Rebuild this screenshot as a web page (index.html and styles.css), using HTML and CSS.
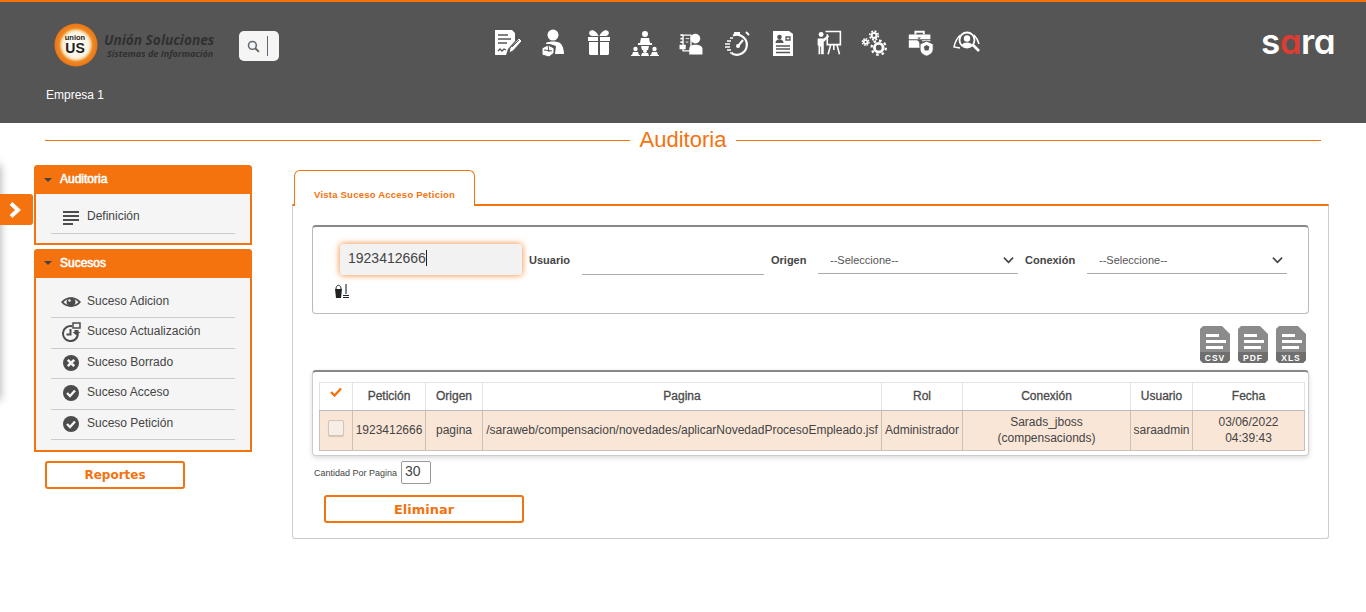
FILE: index.html
```html
<!DOCTYPE html>
<html lang="es">
<head>
<meta charset="utf-8">
<title>Auditoria</title>
<link rel="stylesheet" href="styles.css">
</head>
<body>
<header class="topbar">
  <div class="topbar-row">
    <div class="brand">
      <svg class="brand-mark" viewBox="0 0 44 44" width="44" height="44">
        <defs><radialGradient id="lg" cx="50%" cy="50%" r="50%"><stop offset="0" stop-color="#fff"/><stop offset=".6" stop-color="#fbf3df"/><stop offset=".7" stop-color="#f6c98a"/><stop offset=".78" stop-color="#ef8a25"/><stop offset="1" stop-color="#ea7414"/></radialGradient></defs>
        <circle cx="22" cy="22" r="21.500" fill="url(#lg)"/>
        <text x="21" y="17" class="mark-small" text-anchor="middle">union</text>
        <text x="21" y="30" class="mark-big" text-anchor="middle">US</text>
      </svg>
      <div class="brand-text">
        <div class="brand-name">Unión Soluciones</div>
        <div class="brand-sub">Sistemas de Información</div>
      </div>
    </div>
    <div class="search">
      <svg viewBox="0 0 12 12" width="13" height="13"><circle cx="5" cy="5" r="3.600" fill="none" stroke="#5d6a75" stroke-width="1.400"/><path d="M7.600 7.600 11 11" stroke="#6b6257" stroke-width="1.700"/></svg>
      <span class="search-bar"></span>
    </div>
    <nav class="modules">
      <svg viewBox="0 0 30 30" width="30" height="30"><path d="M3 2h17l3 3v8l-7 8-2 6H3z" fill="#fff"/><path d="M6 7h10M6 11h13M6 15h9M6 23l2-2 2 2 2-2 2 1" stroke="#555" stroke-width="1.300" fill="none"/><path d="M17 25l1-5 9-10 3 3-9 10z" fill="#fff" stroke="#555"/><path d="M20 19l7-7" stroke="#555"/></svg>
      <svg viewBox="0 0 30 30" width="30" height="30"><circle cx="15" cy="7" r="5.500" fill="#fff"/><path d="M8 15c3-2 11-2 14 0 3 2 4 8 4 11h-9l1-8-6-2-4 0z" fill="#fff"/><path d="M4 20l6-3 6 3 0 5-5 4-7-2z" fill="#fff" stroke="#555"/><path d="M10 17l1 7M6 22l8 1" stroke="#555"/></svg>
      <svg viewBox="0 0 30 30" width="30" height="30"><path d="M6 3c3-2 7 1 8.500 5h1C17 4 21 1 24 3c2 2 0 5-2 5H8C6 8 4 5 6 3z" fill="#fff"/><path d="M4 9h10v4H4zM16 9h10v4H16zM5 14h9v13H6l-1-1zM16 14h9v12l-1 1h-8z" fill="#fff"/></svg>
      <svg viewBox="0 0 30 30" width="30" height="30"><circle cx="15" cy="6" r="3" fill="#fff"/><path d="M10 15l1-5h8l1 5zM8 15h14v2H8zM11 18h8l-1 4h-6z" fill="#fff"/><g fill="#fff"><circle cx="5.500" cy="21" r="2.200"/><path d="M2 27l1-3h5l1 3zM1 27h9v1H1z"/><circle cx="15" cy="23" r="2"/><path d="M11 28l1-3h6l1 3z"/><circle cx="24.500" cy="21" r="2.200"/><path d="M21 27l1-3h5l1 3zM20 27h9v1h-9z"/></g></svg>
      <svg viewBox="-2 -2 34 34" width="30" height="30"><circle cx="20" cy="10" r="5.500" fill="#fff"/><path d="M13 28v-6c0-4 3-5 7-5s8 1 8 5v6z" fill="#fff"/><path d="M6 6h9v18H6z" fill="none" stroke="#fff" stroke-width="1.500"/><path d="M2 17h7v5H2zM3 5h3v2H3zM3 9h3v2H3zM3 13h3v2H3z" fill="#fff"/><path d="M9 10h4M9 14h3" stroke="#fff"/></svg>
      <svg viewBox="0 0 30 30" width="30" height="30"><path d="M12 4h6v2h-6z" fill="#fff"/><path d="M11 7.500a10 10 0 1 1-1 18" fill="none" stroke="#fff" stroke-width="2.200"/><path d="M16 18l5-6" stroke="#fff" stroke-width="2"/><circle cx="16" cy="18" r="2" fill="#fff"/><path d="M24 4l3 3" stroke="#fff" stroke-width="1.800"/><path d="M8 10h3M5 13h4M3 16h5M3 19h5M5 22h4M8 25h3" stroke="#fff" stroke-width="1.500"/></svg>
      <svg viewBox="0 0 30 30" width="30" height="30"><path d="M5 3h16l4 3v22H5z" fill="#fff"/><circle cx="11.500" cy="9" r="2.300" fill="#555"/><path d="M7.500 15c0-5 8-5 8 0z" fill="#555"/><path d="M18 9h4v3h-4zM8 18h14M8 21h14M8 24.500h14" stroke="#555" stroke-width="1.300" fill="none"/></svg>
      <svg viewBox="-2 -1 34 32" width="30" height="28"><circle cx="6" cy="6.500" r="2.800" fill="#fff"/><path d="M2 11h7l5-4 1 2-6 6v14H6v-9H5v9H3V19H2z" fill="#fff"/><path d="M11 3h17v15H13V6" fill="none" stroke="#fff" stroke-width="1.800"/><path d="M17 18l-3 11M24 18l3 11M20.500 18v6" stroke="#fff" stroke-width="1.800"/></svg>
      <svg viewBox="-1 -2 32 32" width="30" height="30"><g fill="none" stroke="#fff"><circle cx="19" cy="19" r="4.600" stroke-width="3"/><circle cx="19" cy="19" r="7.600" stroke-width="2.400" stroke-dasharray="2.800 3.170"/><circle cx="14" cy="6" r="2.600" stroke-width="2.200"/><circle cx="14" cy="6" r="4.600" stroke-width="1.800" stroke-dasharray="2 1.610"/><circle cx="5" cy="13" r="2" stroke-width="1.800"/><circle cx="5" cy="13" r="3.500" stroke-width="1.500" stroke-dasharray="1.700 1"/></g></svg>
      <svg viewBox="-1 -1 32 32" width="30" height="30"><path d="M9 6V3h9v3" fill="none" stroke="#fff" stroke-width="2"/><path d="M2 6h23v5H2zM2 12h9l2 2 1 6H2zM16 12h9v1h-9z" fill="#fff"/><path d="M11 9l2 2 2-2z" fill="#555"/><path d="M21 13l7 3v6c0 4-4 6-7 7-3-1-7-3-7-7v-6z" fill="#fff" stroke="#555"/><path d="M21 17l3 2-1 4h-4l-1-4z" fill="#555"/></svg>
      <svg viewBox="0 0 30 30" width="30" height="30"><circle cx="15" cy="12" r="7.500" fill="none" stroke="#fff" stroke-width="1.800"/><circle cx="15" cy="10.500" r="3.200" fill="#fff"/><path d="M9.500 17.500c1-4 10-4 11 0l-5.500 2z" fill="#fff"/><path d="M8.500 7C5 10 3 14 2 19l6 1M22 7c2 2 4 5 5 9" fill="none" stroke="#fff" stroke-width="1.500"/><path d="M21 17l6 6" stroke="#fff" stroke-width="2.600"/></svg>
    </nav>
    <div class="sara"><span>s</span><span class="sara-red">a</span><span>ra</span></div>
  </div>
  <div class="company">Empresa 1</div>
</header>

<div class="page-title">
  <span class="title-line"></span>
  <h1>Auditoria</h1>
  <span class="title-line"></span>
</div>

<div class="drawer-edge"></div>
<button class="drawer-toggle" type="button" aria-label="Abrir">
  <svg viewBox="0 0 14 16" width="14" height="16"><path d="M3 1.500 10 8l-7 6.500" fill="none" stroke="#fff" stroke-width="4"/></svg>
</button>

<div class="layout">
  <aside class="sidebar">
    <section class="side-panel">
      <h2 class="side-head"><i class="caret"></i>Auditoria</h2>
      <ul class="side-list">
        <li class="side-item">
          <svg viewBox="0 0 20 20" width="20" height="20"><path d="M2 4h16v2H2zM2 8h16v2H2zM2 12h16v2H2zM2 16h10v2H2z" fill="#4c4c4c"/></svg>
          Definición
        </li>
      </ul>
    </section>
    <section class="side-panel">
      <h2 class="side-head"><i class="caret"></i>Sucesos</h2>
      <ul class="side-list side-list-events">
        <li class="side-item">
          <svg viewBox="0 0 20 20" width="20" height="20"><path d="M0 10c5-6.500 15-6.500 20 0-5 6.500-15 6.500-20 0z" fill="#4c4c4c"/><path d="M2.500 10c4-4.500 11-4.500 15 0-4 4.500-11 4.500-15 0z" fill="#f5f5f5"/><circle cx="10" cy="10" r="4.500" fill="#4c4c4c"/><circle cx="8.500" cy="8.500" r="1.200" fill="#f5f5f5"/></svg>
          Suceso Adicion
        </li>
        <li class="side-item">
          <svg viewBox="0 0 20 20" width="20" height="20"><path d="M11 4.200a7.500 7.500 0 1 0 6 8" fill="none" stroke="#4c4c4c" stroke-width="2"/><path d="M9.500 7v5.500H5.500" fill="none" stroke="#4c4c4c" stroke-width="2"/><path d="M12 1h7v5h-7z" fill="none" stroke="#4c4c4c" stroke-width="1.500"/><path d="M13.500 8h4v2h2l-4 3.500-4-3.500h2z" fill="#4c4c4c"/></svg>
          Suceso Actualización
        </li>
        <li class="side-item">
          <svg viewBox="0 0 20 20" width="20" height="20"><circle cx="10" cy="10" r="8" fill="#4c4c4c"/><path d="M6.800 6.800l6.400 6.400M13.200 6.800l-6.400 6.400" stroke="#f5f5f5" stroke-width="2.600"/></svg>
          Suceso Borrado
        </li>
        <li class="side-item">
          <svg viewBox="0 0 20 20" width="20" height="20"><circle cx="10" cy="10" r="8" fill="#4c4c4c"/><path d="M6 10l3 3 5-5.500" fill="none" stroke="#f5f5f5" stroke-width="2.400"/></svg>
          Suceso Acceso
        </li>
        <li class="side-item">
          <svg viewBox="0 0 20 20" width="20" height="20"><circle cx="10" cy="10" r="8" fill="#4c4c4c"/><path d="M6 10l3 3 5-5.500" fill="none" stroke="#f5f5f5" stroke-width="2.400"/></svg>
          Suceso Petición
        </li>
      </ul>
    </section>
    <button class="btn btn-reportes" type="button">Reportes</button>
  </aside>

  <main class="content">
    <div class="tab">Vista Suceso Acceso Peticion</div>
    <div class="tab-panel">
      <form class="filters">
        <div class="filter-row">
          <div class="field-focus">1923412666<i class="text-caret"></i></div>
          <label class="field-label label-user">Usuario</label>
          <div class="field-line field-user"></div>
          <label class="field-label label-origin">Origen</label>
          <div class="fake-select">--Seleccione--
            <svg viewBox="0 0 12 8" width="11" height="8"><path d="M1 1.500l5 5 5-5" fill="none" stroke="#444" stroke-width="1.800"/></svg>
          </div>
          <label class="field-label label-conn">Conexión</label>
          <div class="fake-select">--Seleccione--
            <svg viewBox="0 0 12 8" width="11" height="8"><path d="M1 1.500l5 5 5-5" fill="none" stroke="#444" stroke-width="1.800"/></svg>
          </div>
        </div>
        <svg class="clear-icon" viewBox="0 0 16 16" width="16" height="16"><path d="M1 6h7l-1 9H2z" fill="#222"/><path d="M2 6c0-5 5-5 5 0" fill="none" stroke="#222"/><path d="M12 1v10" stroke="#1f3a5a" stroke-width="1.200"/><path d="M9 12h6v1H9zM9 14h6v1H9z" fill="#222"/></svg>
      </form>

      <div class="exports">
        <svg viewBox="0 0 30 37" width="30" height="37"><path d="M3 0h19l8 8v26l-3 3H3l-3-3V3z" fill="#8b8b8b"/><path d="M0 26h30v8l-3 3H3l-3-3z" fill="#6f6f6f"/><path d="M6 8h13v3H6zM6 14h20v3H6zM6 20h17v3H6z" fill="#fff"/><text x="15" y="35" class="export-text" text-anchor="middle">CSV</text></svg>
        <svg viewBox="0 0 30 37" width="30" height="37"><path d="M3 0h19l8 8v26l-3 3H3l-3-3V3z" fill="#8b8b8b"/><path d="M0 26h30v8l-3 3H3l-3-3z" fill="#6f6f6f"/><path d="M6 8h13v3H6zM6 14h20v3H6zM6 20h17v3H6z" fill="#fff"/><text x="15" y="35" class="export-text" text-anchor="middle">PDF</text></svg>
        <svg viewBox="0 0 30 37" width="30" height="37"><path d="M3 0h19l8 8v26l-3 3H3l-3-3V3z" fill="#8b8b8b"/><path d="M0 26h30v8l-3 3H3l-3-3z" fill="#6f6f6f"/><path d="M6 8h13v3H6zM6 14h20v3H6zM6 20h17v3H6z" fill="#fff"/><text x="15" y="35" class="export-text" text-anchor="middle">XLS</text></svg>
      </div>

      <div class="table-box">
        <table class="grid">
          <colgroup>
            <col class="c-check"><col class="c-pet"><col class="c-orig"><col class="c-pag"><col class="c-rol"><col class="c-con"><col class="c-usr"><col class="c-fec">
          </colgroup>
          <thead>
            <tr>
              <th><svg viewBox="0 0 12 10" width="12" height="10"><path d="M1 5l3.500 3.500L11 1.500" fill="none" stroke="#f4730e" stroke-width="2.400"/></svg></th>
              <th>Petición</th><th>Origen</th><th>Pagina</th><th>Rol</th><th>Conexión</th><th>Usuario</th><th>Fecha</th>
            </tr>
          </thead>
          <tbody>
            <tr>
              <td><span class="check"></span></td>
              <td>1923412666</td>
              <td>pagina</td>
              <td class="path">/saraweb/compensacion/novedades/aplicarNovedadProcesoEmpleado.jsf</td>
              <td>Administrador</td>
              <td>Sarads_jboss<br>(compensacionds)</td>
              <td>saraadmin</td>
              <td>03/06/2022<br>04:39:43</td>
            </tr>
          </tbody>
        </table>
      </div>

      <div class="page-size">
        <span>Cantidad Por Pagina</span>
        <div class="size-box">30</div>
      </div>

      <button class="btn btn-eliminar" type="button">Eliminar</button>
    </div>
  </main>
</div>
</body>
</html>
```
FILE: styles.css
```css
* { box-sizing: border-box; }
html, body { margin: 0; padding: 0; }
body {
  background: #fff;
  color: #444;
  font-family: "Liberation Sans", Arial, sans-serif;
  font-size: 12px;
  height: 612px;
  overflow: hidden;
  position: relative;
}

/* header */
.topbar {
  height: 123px;
  background: #555;
  border-top: 2px solid #f4730e;
}
.topbar-row { display: flex; align-items: flex-start; height: 86px; }
.brand { display: flex; margin: 21px 0 0 54px; width: 171px; }
.brand-mark { flex: none; }
.mark-small { font: bold 7.500px "Liberation Sans", sans-serif; fill: #222; }
.mark-big { font: bold 14px "Liberation Sans", sans-serif; fill: #222; }
.brand-text { margin: 9px 0 0 6px; color: #303030; font-family: "Open Sans", sans-serif; font-style: italic; font-weight: 700; white-space: nowrap; }
.brand-name { font-size: 13.700px; line-height: 16px; }
.brand-sub { font-size: 9.100px; line-height: 11px; margin-left: 3px; }
.search {
  margin: 29px 0 0 14px;
  width: 40px; height: 30px;
  background: #f5f5f5;
  border-radius: 5px;
  display: flex; align-items: center;
  padding-left: 8px;
}
.search-bar { width: 1px; height: 20px; background: #666; margin-left: 7px; }
.modules { display: flex; gap: 16px; margin: 26px 0 0 213px; }
.modules svg { display: block; }
.sara {
  margin: 16px 31px 0 auto;
  font-family: Inter, sans-serif;
  font-feature-settings: "cv11";
  font-size: 35px;
  line-height: 46px;
  font-weight: 600;
  color: #fff;
  letter-spacing: -.5px;
}
.sara-red { color: #dc3d33; }
.company { margin-left: 46px; color: #fff; font-size: 12px; line-height: 14px; }

/* title */
.page-title { display: flex; align-items: center; gap: 10px; margin: 0 45px; height: 34px; }
.page-title h1 { margin: 0; font-size: 22px; font-weight: 400; color: #f4730e; line-height: 34px; }
.title-line { flex: 1; height: 1px; background: #f4730e; }

/* overlay drawer */
.drawer-edge { position: absolute; left: -12px; top: 165px; width: 12px; height: 235px; box-shadow: 0 0 10px rgba(0,0,0,.35); }
.drawer-toggle {
  position: absolute; left: 0; top: 194px;
  width: 33px; height: 31px;
  background: #f4730e;
  border: 0; border-radius: 0 3px 3px 0;
  padding: 0 0 0 8px;
  display: flex; align-items: center; justify-content: flex-start;
}

/* layout */
.layout { display: flex; margin-top: 8px; padding-left: 34px; }
.sidebar { width: 218px; flex: none; }
.side-panel {
  background: #f5f5f5;
  border: 2px solid #f4730e;
  border-radius: 4px 4px 0 0;
  margin-bottom: 4px;
}
.side-head {
  margin: -2px -2px 0;
  height: 29px;
  background: #f4730e;
  border-radius: 4px 4px 0 0;
  color: #fff;
  font-size: 12px;
  font-weight: 400;
  text-shadow: 0 0 1px #fff;
  -webkit-text-stroke: .3px #fff;
  line-height: 27px;
  padding-left: 10px;
  display: flex; align-items: center;
}
.caret { width: 0; height: 0; border: 4px solid transparent; border-top: 4px solid #444; border-bottom: 0; margin-right: 8px; }
.side-list { list-style: none; margin: 0 15px; padding: 9px 0 9px; }
.side-list-events { padding: 10.400px 0 10px; }
.side-item {
  display: flex; align-items: center; gap: 6px;
  height: 30.500px;
  padding: 0 0 4px 10px;
  border-bottom: 1px solid #ccc;
  color: #444;
  font-size: 12px;
}
.side-item svg { flex: none; margin-top: 2px; }
.btn {
  display: block;
  background: #fff;
  border: 2px solid #f4730e;
  border-radius: 3px;
  color: #f4730e;
  font-family: "DejaVu Sans", sans-serif;
  font-size: 13px;
  font-weight: 700;
}
.btn-reportes { width: 140px; height: 28px; margin: 9px 0 0 11px; font-size: 12px; }

/* main */
.content { width: 1037px; margin: 5px 0 0 40px; }
.tab {
  position: relative;
  width: 181px; height: 36px;
  margin: 0 0 -2px 2px;
  background: #fff;
  border: 1px solid #f4730e;
  border-bottom: 0;
  border-radius: 6px 6px 0 0;
  color: #f4730e;
  font-size: 9.500px;
  font-weight: 700;
  line-height: 47px;
  padding-left: 19px;
  letter-spacing: .23px;
  white-space: nowrap;
}
.tab-panel {
  height: 335px;
  border: 1px solid #ccc;
  border-top: 2px solid #f4730e;
  border-radius: 0 0 3px 3px;
  padding: 19px 19px 0;
}
.filters {
  height: 89px;
  border: 1px solid #bbb;
  border-top: 2px solid #888;
  border-radius: 4px;
  padding: 17px 0 0 27px;
}
.filter-row { display: flex; align-items: flex-end; }
.field-focus {
  width: 182px; height: 31px;
  background: #f2f2f2;
  border-radius: 3px;
  box-shadow: 0 0 6px rgba(244,115,14,.9);
  color: #444;
  font-size: 14px;
  line-height: 28px;
  padding-left: 8px;
}
.text-caret { display: inline-block; width: 1px; height: 16px; background: #222; vertical-align: -3px; }
.field-label { color: #444; font-size: 11px; font-weight: 700; line-height: 30px; }
.label-user { margin-left: 7px; width: 53px; }
.field-user { width: 182px; height: 31px; border-bottom: 1px solid #aaa; }
.label-origin { margin-left: 7px; width: 47px; }
.label-conn { margin-left: 7px; width: 62px; }
.fake-select {
  width: 200px; height: 27px;
  border-bottom: 1px solid #aaa;
  display: flex; align-items: center; justify-content: space-between;
  padding: 0 4px 1px 12px;
  margin-bottom: 1px;
  font-size: 11px;
  color: #555;
}
.clear-icon { display: block; margin: 8px 0 0 -6px; }
.exports { display: flex; justify-content: flex-end; gap: 8px; height: 37px; margin: 12px 3px 7px 0; }
.table-box {
  height: 86px;
  border: 1px solid #ccc;
  border-top: 2px solid #888;
  border-radius: 4px;
  box-shadow: 0 2px 5px rgba(0,0,0,.15);
  padding: 10px 4px 0 6px;
}
.grid { border-collapse: collapse; table-layout: fixed; width: 985px; font-size: 12px; color: #444; }
.c-check { width: 33px; } .c-pet { width: 73px; } .c-orig { width: 57px; } .c-pag { width: 399px; }
.c-rol { width: 81px; } .c-con { width: 168px; } .c-usr { width: 62px; } .c-fec { width: 112px; }
.grid th, .grid td { padding: 0; text-align: center; white-space: nowrap; }
.grid th { height: 28px; padding-bottom: 1px; border: 1px solid #e3e3e3; border-bottom: 1px solid #bbb; font-size: 12px; font-weight: 400; -webkit-text-stroke: .3px #4a4a4a; color: #4a4a4a; }
.grid th svg { display: block; margin: -8px auto 0 10px; }
.grid td { height: 40px; padding-bottom: 2px; background: #fae6d7; border: 1px solid #c9c0b8; line-height: 16px; }
.check { display: block; width: 16px; height: 16px; margin: -4px auto 0 8px; border: 1px solid #cfc5bb; border-radius: 2px; background: #f7efe7; box-shadow: 0 1px 1px rgba(0,0,0,.15); }
.page-size { display: flex; align-items: center; gap: 4px; margin: 5px 0 0 2px; font-size: 9px; color: #444; }
.size-box { width: 30px; height: 23px; border: 1px solid #999; border-radius: 2px; font-size: 14px; line-height: 19px; padding-left: 3px; }
.btn-eliminar { width: 200px; height: 28px; margin: 11px 0 0 12px; padding-top: 2px; }
.export-text { font: bold 8.500px "Liberation Sans", sans-serif; fill: #fff; letter-spacing: 1px; }
```
